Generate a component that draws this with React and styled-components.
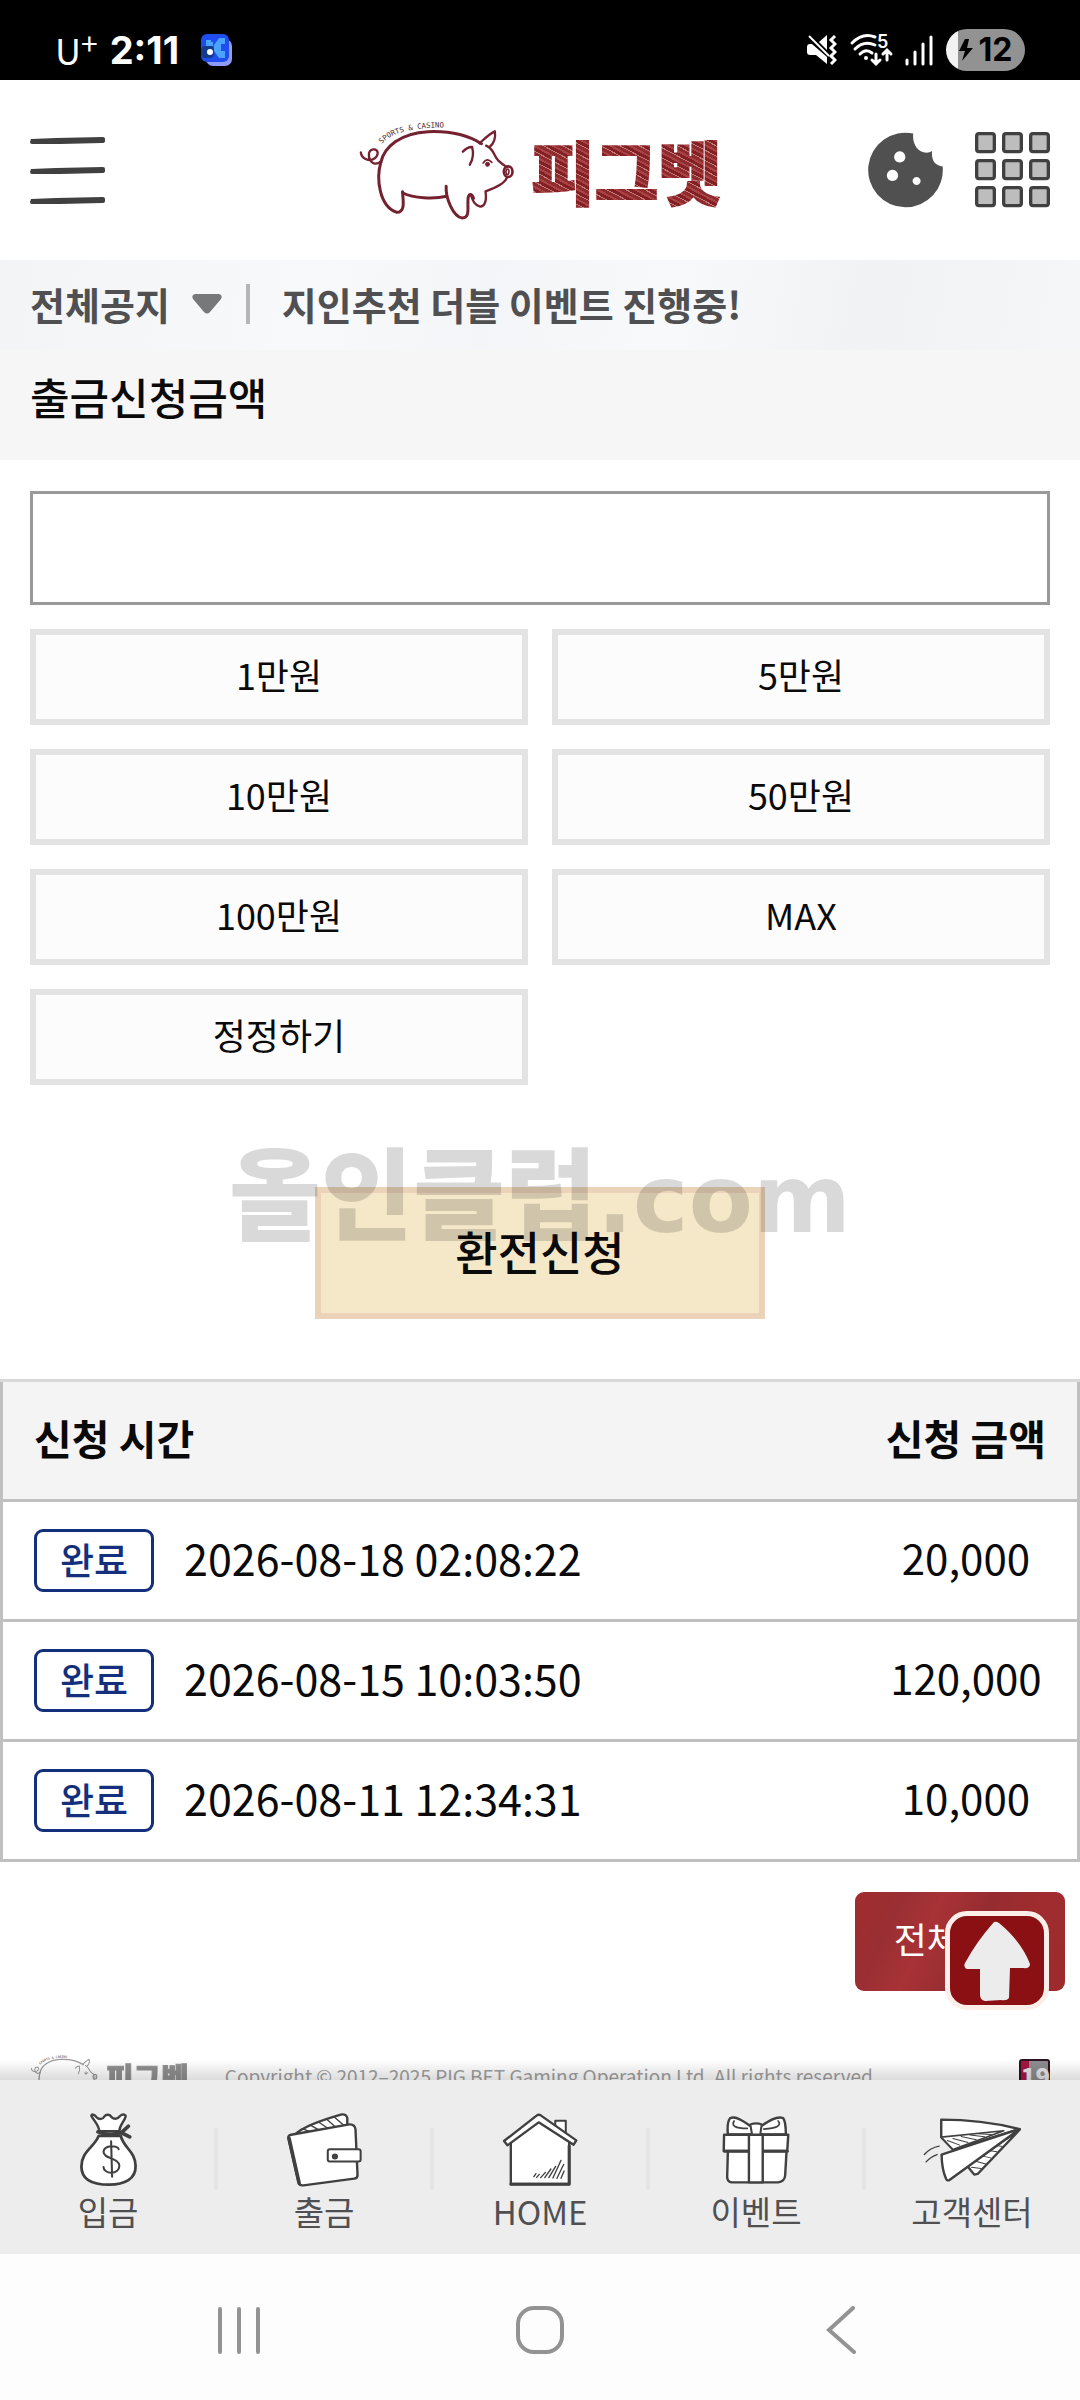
import { useState } from "react";
import styled, { ThemeProvider, createGlobalStyle } from "styled-components";

const theme = {
  text: "#0a0a0a",
  textSoft: "#505053",
  bg: "#ffffff",
  bgSoft: "#f6f6f6",
  line: "#c0c0c0",
  lineSoft: "#e3e3e3",
  ink: "#404040",
  brand: "#742230",
  done: "#14307c",
};

const GlobalStyle = createGlobalStyle`
  * {
    box-sizing: border-box;
  }
  body {
    margin: 0;
    background-color: #ffffff;
  }
  body, button, input {
    font-family: "Noto Sans CJK KR", "Noto Sans", sans-serif;
  }
  button {
    padding: 0;
    border: none;
    background: none;
    color: inherit;
    cursor: pointer;
  }
  svg {
    display: block;
    flex-shrink: 0;
  }
`;

const Screen = styled.div`
  display: flex;
  flex-direction: column;
  height: 100vh;
  overflow: hidden;
  background-color: ${({ theme }) => theme.bg};
  color: ${({ theme }) => theme.text};
`;

/* status bar */

const StatusBar = styled.div`
  display: flex;
  align-items: center;
  justify-content: space-between;
  height: 80px;
  padding: 20px 55px 0;
  flex-shrink: 0;
  background-color: #000000;
  color: #ffffff;
`;

const StatusGroup = styled.div`
  display: flex;
  align-items: center;
  gap: ${({ $gap }) => $gap}px;
`;

const Carrier = styled.span`
  padding-bottom: 2px;
  font-size: 36px;
  line-height: 42px;
  font-weight: 400;
  sup {
    font-size: 30px;
    line-height: 0;
    vertical-align: 10px;
  }
`;

const Clock = styled.span`
  margin-right: 10px;
  font-family: Inter, sans-serif;
  font-size: 38px;
  line-height: 42px;
  font-weight: 700;
`;

const Battery = styled.div`
  display: flex;
  align-items: center;
  justify-content: center;
  gap: 6px;
  width: 79px;
  height: 42px;
  border-radius: 21px;
  background: linear-gradient(90deg, #f2f2f2 12px, #929292 12px);
  color: #000000;
  font-family: Inter, sans-serif;
  font-size: 32px;
  line-height: 42px;
  font-weight: 700;
`;

/* header */

const Header = styled.header`
  display: grid;
  grid-template-columns: 1fr auto 1fr;
  align-items: center;
  height: 180px;
  padding: 0 30px;
  flex-shrink: 0;
`;

const HeaderActions = styled.div`
  display: flex;
  justify-content: flex-end;
  gap: 32px;
`;

const MenuButton = styled.button`
  justify-self: start;
`;

const Logo = styled.a`
  display: flex;
  align-items: center;
  gap: ${({ $small }) => ($small ? 8 : 16)}px;
  text-decoration: none;
`;

const LogoText = styled.span`
  font-size: ${({ $small }) => ($small ? 30 : 69)}px;
  line-height: ${({ $small }) => ($small ? 40 : 80)}px;
  font-weight: 900;
  color: transparent;
  background: ${({ $small }) =>
    $small
      ? "#8f8f8f"
      : "repeating-linear-gradient(28deg, #842024 0 3px, #a84346 3px 5px, #8f2a2d 5px 8px, #c07c7a 8px 9px)"};
  background-clip: text;
  -webkit-background-clip: text;
  -webkit-text-stroke: ${({ $small }) => ($small ? 1 : 2)}px transparent;
`;

const Notice = styled.div`
  display: flex;
  align-items: center;
  height: 90px;
  padding: 0 30px 2px;
  flex-shrink: 0;
  background: linear-gradient(100deg, #f2f4f6 0%, #f7f9fa 30%, #f4f5f8 45%, #f8f9fa 62%, #f1f2f4 80%, #f5f6f7 100%);
  color: ${({ theme }) => theme.textSoft};
  font-size: 38px;
  line-height: 48px;
  font-weight: 700;
`;

const NoticeFilter = styled.button`
  display: flex;
  align-items: center;
  gap: 22px;
  padding-right: 24px;
  border-right: 4px solid #b4b5b7;
  font-size: 38px;
  line-height: 40px;
  font-weight: 700;
`;

const NoticeLink = styled.a`
  margin-left: 32px;
  color: inherit;
  text-decoration: none;
`;

/* withdrawal form */

const Content = styled.main`
  flex: 1;
  min-height: 0;
  overflow-y: auto;
  scrollbar-width: none;
`;

const TitleBar = styled.div`
  height: 110px;
  padding: 18px 30px;
  background-color: ${({ theme }) => theme.bgSoft};
`;

const Title = styled.label`
  display: block;
  font-size: 43px;
  line-height: 56px;
  font-weight: 500;
`;

const Form = styled.form`
  padding: 31px 30px 60px;
`;

const AmountInput = styled.input`
  display: block;
  width: 100%;
  height: 114px;
  padding: 0 24px;
  border: 3px solid #999999;
  border-radius: 0;
  outline: none;
  background-color: ${({ theme }) => theme.bg};
  font-size: 42px;
`;

const Amounts = styled.div`
  display: grid;
  grid-template-columns: 1fr 1fr;
  gap: 24px;
  margin-top: 24px;
`;

const AmountButton = styled.button`
  height: 96px;
  padding-bottom: 7px;
  border: 6px solid ${({ theme }) => theme.lineSoft};
  background-color: #fcfcfc;
  font-size: 36px;
  line-height: 48px;
`;

const SubmitArea = styled.div`
  position: relative;
  display: flex;
  justify-content: center;
  margin-top: 102px;
`;

const SubmitButton = styled.button`
  width: 450px;
  height: 132px;
  padding-bottom: 7px;
  border: 6px solid #ebd3b9;
  background-color: #f5e8c8;
  font-size: 46px;
  line-height: 60px;
  font-weight: 500;
`;

const Watermark = styled.div`
  position: absolute;
  left: 0;
  right: 0;
  top: -58px;
  display: flex;
  align-items: baseline;
  justify-content: center;
  color: rgba(0, 0, 0, 0.15);
  font-size: 100px;
  line-height: 120px;
  font-weight: 900;
  pointer-events: none;
  span {
    font-family: "DejaVu Sans", sans-serif;
    font-size: 94px;
    font-weight: 700;
  }
`;

/* history */

const History = styled.table`
  width: 100%;
  border-collapse: collapse;
  border: 3px solid ${({ theme }) => theme.line};
`;

const HeadCell = styled.th`
  height: 120px;
  padding: 0 31px 7px;
  border-top: 3px solid #d9d9d9;
  border-bottom: 3px solid ${({ theme }) => theme.line};
  background-color: #f4f4f4;
  font-size: 41px;
  line-height: 56px;
  font-weight: 700;
  text-align: left;
  white-space: nowrap;
`;

const Cell = styled.td`
  height: 120px;
  padding: 0 31px;
  border-bottom: 3px solid ${({ theme }) => theme.line};
  font-size: 42px;
  line-height: 56px;
  white-space: nowrap;
`;

const AmountCell = styled(Cell)`
  width: 1px;
  padding: 0 0 7px;
  text-align: center;
`;

const Request = styled.div`
  display: flex;
  align-items: center;
  gap: 30px;
`;

const RequestTime = styled.time`
  padding-bottom: 7px;
  font-size: 43px;
`;

const Status = styled.span`
  height: 63px;
  padding: 0 23px;
  border: 3px solid ${({ theme }) => theme.done};
  border-radius: 9px;
  color: ${({ theme }) => theme.done};
  font-size: 37px;
  line-height: 54px;
  font-weight: 500;
`;

const HistoryActions = styled.div`
  display: flex;
  justify-content: flex-end;
  padding: 30px 15px 60px;
`;

const ClearButton = styled.button`
  width: 210px;
  height: 99px;
  padding-bottom: 7px;
  border-radius: 9px;
  background: linear-gradient(115deg, #a02c2e 0%, #9a2f33 20%, #a83236 35%, #962c30 55%, #a02c2f 75%, #9c2b2e 100%);
  color: #ffffff;
  font-size: 36px;
  line-height: 48px;
`;

const Footer = styled.footer`
  display: flex;
  align-items: center;
  padding: 0 30px;
  height: 50px;
`;

const Copyright = styled.p`
  flex: 1;
  margin: 0 0 0 36px;
  color: #a0a0a0;
  font-size: 19px;
  line-height: 24px;
  white-space: nowrap;
`;

const AdultMark = styled.span`
  width: 31px;
  height: 34px;
  border: 2px solid #2c1420;
  border-radius: 3px;
  background: linear-gradient(90deg, #a3173f 30%, #8c8c90 30%);
  color: #e4e4e6;
  font-size: 24px;
  line-height: 30px;
  font-weight: 900;
  text-align: center;
`;

/* bottom navigation */

const BottomNav = styled.nav`
  position: relative;
  display: grid;
  grid-template-columns: repeat(5, 1fr);
  height: 174px;
  flex-shrink: 0;
  background-color: #ededed;
  &::before {
    content: "";
    position: absolute;
    left: 0;
    right: 0;
    bottom: 100%;
    height: 20px;
    background: linear-gradient(rgba(0, 0, 0, 0), rgba(0, 0, 0, 0.14));
    pointer-events: none;
  }
`;

const NavItem = styled.a`
  position: relative;
  display: flex;
  flex-direction: column;
  align-items: center;
  padding-top: 31px;
  color: ${({ theme }) => theme.textSoft};
  font-size: 33px;
  line-height: 48px;
  font-weight: 400;
  text-decoration: none;
  & + &::before {
    content: "";
    position: absolute;
    left: -2px;
    top: 48px;
    width: 4px;
    height: 62px;
    background-color: #e5e5e5;
  }
`;

const NavIcon = styled.span`
  display: flex;
  align-items: center;
  height: 76px;
`;

const TopButton = styled.button`
  position: absolute;
  right: 31px;
  bottom: calc(100% + 70px);
  display: flex;
  align-items: center;
  justify-content: center;
  width: 104px;
  height: 99px;
  border: 5px solid #fdeeea;
  border-radius: 22px;
  background-color: #8b1014;
`;

const SystemNav = styled.div`
  display: grid;
  grid-template-columns: repeat(3, 1fr);
  align-items: center;
  justify-items: center;
  height: 146px;
  padding: 6px 88px 0;
  flex-shrink: 0;
  background-color: #fdfdfd;
  color: #939393;
`;

/* drawings */

const Pig = ({ width, height, color }) => (
  <svg width={width} height={height} viewBox="54 54 470 306" fill="none" stroke={color} strokeWidth="9" strokeLinecap="round" strokeLinejoin="round">
    <path d="M62 154C64 172 82 181 98 175C118 166 116 144 100 145C84 147 82 166 92 180C98 190 112 190 122 182" strokeWidth="7" />
    <path d="M122 184C132 138 180 96 264 92C336 89 392 108 424 128" />
    <path d="M418 127C434 112 448 98 464 91C467 108 462 128 448 138M438 134C462 144 460 164 474 178C484 188 492 194 500 198" strokeWidth="7" />
    <ellipse cx="504" cy="212" rx="13" ry="16" strokeWidth="8" />
    <path d="M499 206C504 200 510 210 504 220C498 224 496 214 499 206" strokeWidth="5" />
    <path d="M500 230C494 248 462 262 436 271C440 300 434 316 420 317C404 314 398 300 392 282" strokeWidth="7" />
    <path d="M318 256C316 290 338 346 366 351C392 350 380 318 384 290C386 276 396 278 400 292" />
    <path d="M188 276C220 292 280 295 320 286" />
    <path d="M122 184C108 230 116 316 170 334C196 334 189 300 187 272" />
    <path d="M368 152C378 142 386 137 396 138C401 158 398 176 389 191" strokeWidth="7" />
    <path d="M429 186Q440 168 455 184" strokeWidth="5" />
    <circle cx="442" cy="190" r="6" fill={color} strokeWidth="3" />
    <path id={`pig-arc-${width}`} d="M124 129C160 92 220 76 350 80" stroke="none" />
    <text fill="#4a2a2e" stroke="none" fontFamily="DejaVu Sans Mono, monospace" fontSize="22">
      <textPath href={`#pig-arc-${width}`}>SPORTS &amp; CASINO</textPath>
    </text>
  </svg>
);

const MenuIcon = () => (
  <svg width="75" height="67" viewBox="0 0 75 67" fill={theme.ink}>
    {[0, 30, 60].map((y) => (
      <path key={y} transform={`translate(0 ${y})`} d="M1 2L26 1L73 0Q75 0 75 2V4Q75 6 72 6L30 7L2 7Q0 7 0 5Z" />
    ))}
  </svg>
);

const CookieIcon = () => (
  <svg width="75" height="76" viewBox="85 65 227 229">
    <path
      fill="#505050"
      fillRule="evenodd"
      d="M222 69C218 98 234 126 262 127Q272 127 279 122C276 148 286 166 311 169A113 113 0 1 1 222 69ZM181 123a17 17 0 1 0 .1 0ZM159 179a17 17 0 1 0 .1 0ZM232 201a12 12 0 1 0 .1 0Z"
    />
  </svg>
);

const GridIcon = () => (
  <svg width="75" height="76" viewBox="0 0 225 228" fill="#bdbdbd" stroke={theme.ink} strokeWidth="10">
    {[5, 86, 167].map((y) => [5, 86, 167].map((x) => <rect key={`${x}-${y}`} x={x} y={y} width="53" height="54" rx="7" />))}
  </svg>
);

const iconProps = {
  preserveAspectRatio: "none",
  fill: "#ffffff",
  stroke: theme.ink,
  strokeWidth: 7,
  strokeLinejoin: "round",
  strokeLinecap: "round",
};

const BagIcon = () => (
  <svg width="59" height="75" viewBox="221 212 171 226" {...iconProps}>
    <path d="M280 270C278 250 264 238 257 224C256 216 266 220 272 228C280 236 290 234 294 226C300 218 310 218 316 228C324 236 334 232 340 224C348 216 358 220 356 226C352 242 338 250 338 270Z" />
    <path d="M278 284C266 318 228 330 228 376C228 418 262 431 308 431C354 431 386 414 385 374C384 330 350 320 342 284Z" strokeWidth="8" />
    <path d="M276 272Q308 286 344 274M344 274L364 255M346 276L368 287" strokeWidth="11" fill="none" />
    <path d="M336 324C334 312 294 310 292 332C292 354 338 350 338 374C338 402 292 400 292 378M314 300L317 407" strokeWidth="6" fill="none" />
  </svg>
);

const WalletIcon = () => (
  <svg width="76" height="75" viewBox="825 222 222 224" {...iconProps}>
    <path d="M850 290Q880 260 988 229Q1002 228 1004 240L1004 262Z" />
    <path d="M872 272L900 282M896 261L922 276M920 252L946 270M944 244L968 265M966 237L992 260" strokeWidth="4" fill="none" />
    <path d="M840 290L1010 259Q1026 258 1028 274L1034 410Q1034 420 1024 421L876 441Q864 443 861 432L832 302Q830 292 840 290Z" />
    <path d="M834 300L864 436" strokeWidth="10" />
    <rect x="947" y="333" width="96" height="37" rx="6" strokeWidth="6" />
    <circle cx="968" cy="355" r="7" fill={theme.ink} strokeWidth="4" />
  </svg>
);

const HouseIcon = () => (
  <svg width="76" height="76" viewBox="1460 208 224 228" {...iconProps}>
    <path d="M1617 275V237H1648V292" strokeWidth="6" />
    <path d="M1486 300V427H1658V300L1568 236Z" />
    <path d="M1658 312V428H1486" strokeWidth="9" fill="none" />
    <path d="M1466 298L1562 222Q1568 217 1574 221L1679 296L1671 309L1568 242L1476 311Z" />
    <path d="M1634 410L1643 388M1622 410L1642 368M1610 409L1634 356M1598 408L1618 374M1586 408L1604 382M1574 408L1588 392M1562 407L1570 398M1554 405L1560 396" strokeWidth="4" fill="none" />
  </svg>
);

const GiftIcon = () => (
  <svg width="68" height="69" viewBox="535 222 197 206" {...iconProps}>
    <path d="M616 254C592 236 572 224 558 232Q549 244 552 280H720Q720 242 712 231C694 224 672 238 650 254Z" />
    <path d="M570 240C562 254 572 262 608 262M698 240C708 254 694 262 656 264" strokeWidth="5" fill="none" />
    <path d="M552 330L550 408Q551 423 566 423H698Q717 420 718 402L722 330Z" />
    <path d="M541 281H727L724 329H540Z" />
    <path d="M542 330H724" strokeWidth="9" />
    <path d="M613 281H653V423H613Z" />
    <path d="M617 250Q634 244 650 250L646 280H622Z" strokeWidth="6" />
  </svg>
);

const PlaneIcon = () => (
  <svg width="99" height="65" viewBox="1109 222 288 194" {...iconProps}>
    <path d="M1162 230Q1280 230 1390 258L1196 319L1162 282Z" />
    <path d="M1162 282L1344 263L1196 319Z" strokeWidth="5" />
    <path d="M1180 292L1216 306M1196 286L1240 298M1220 280L1264 290M1246 276L1288 281M1270 272L1308 274" strokeWidth="3" fill="none" />
    <path d="M1238 368L1258 394L1268 392L1390 260Z" />
    <path d="M1250 372L1278 376M1262 354L1292 362M1280 338L1306 344M1300 322L1324 326M1318 306L1340 310" strokeWidth="3" fill="none" />
    <path d="M1163 334L1390 258L1186 410Q1180 414 1176 406Q1164 380 1163 334Z" />
    <path d="M1113 334Q1130 314 1156 309M1118 356Q1132 340 1150 334" strokeWidth="4" fill="none" />
  </svg>
);

const ArrowIcon = () => (
  <svg width="68" height="80" viewBox="0 0 68 80" fill="#ececec">
    <path d="M31 1Q33 0 36 2Q58 20 67 43Q67 48 60 47L47 47L46 77Q44 80 38 79L22 80Q17 79 17 74L17 48L4 48Q0 46 2 42Q14 20 31 1Z" />
  </svg>
);

const AppIcon = () => (
  <svg width="32" height="32" viewBox="0 0 32 32">
    <rect x="5" y="5" width="26" height="27" rx="7" fill="#8f9cf5" />
    <rect width="28" height="28" rx="6" fill="#1f4df0" />
    <path d="M5 6H10V8H12V12H5ZM18 4H24V10H20V17H24V24H18L13 17V11Z" fill="#49a3ff" />
    <rect y="12" width="13" height="12" rx="4" fill="#143a8c" />
    <circle cx="9" cy="18" r="3" fill="#ffffff" />
  </svg>
);

const MuteIcon = () => (
  <svg width="30" height="30" viewBox="0 0 30 30" fill="#ffffff">
    <path d="M0 12Q0 9 3 9H5L20 22V29L9 20H3Q0 20 0 17ZM12 7L20 0V15Z" />
    <path d="M2 1L22 21" stroke="#ffffff" strokeWidth="2" />
    <path d="M28 1L24 5L28 9L24 13L28 17L24 21L28 25L24 29" fill="none" stroke="#ffffff" strokeWidth="3" />
  </svg>
);

const WifiIcon = () => (
  <svg width="42" height="32" viewBox="0 0 42 32" overflow="visible" fill="none" stroke="#ffffff" strokeWidth="3" strokeLinecap="round">
    <path d="M2 9Q13 -2 25 3M5 15Q14 6 25 11M10 20Q16 14 22 19" />
    <circle cx="16" cy="24" r="2" fill="#ffffff" stroke="none" />
    <path d="M26 20V29M22 26L26 30L30 26M37 26V17M33 20L37 16L41 20" />
    <text x="27" y="14" fill="#ffffff" stroke="none" fontFamily="Inter, sans-serif" fontWeight="600" fontSize="18">5</text>
  </svg>
);

const SignalIcon = () => (
  <svg width="28" height="31" viewBox="0 0 28 31" stroke="#ffffff" strokeWidth="3" strokeLinecap="round">
    <path d="M2 25V29M10 17V29M18 9V29M26 2V29" />
  </svg>
);

const BoltIcon = () => (
  <svg width="14" height="22" viewBox="0 0 14 22">
    <path d="M6 0L0 12H6L3 22L14 9H8L10 0Z" />
  </svg>
);

const amounts = ["1만원", "5만원", "10만원", "50만원", "100만원", "MAX", "정정하기"];
const amountValues = [10000, 50000, 100000, 500000, 1000000];

const requests = [
  { time: "2026-08-18 02:08:22", amount: "20,000" },
  { time: "2026-08-15 10:03:50", amount: "120,000" },
  { time: "2026-08-11 12:34:31", amount: "10,000" },
];

const navItems = [
  { label: "입금", Icon: BagIcon },
  { label: "출금", Icon: WalletIcon },
  { label: "HOME", Icon: HouseIcon },
  { label: "이벤트", Icon: GiftIcon },
  { label: "고객센터", Icon: PlaneIcon },
];

function App() {
  const [amount, setAmount] = useState("");

  const handleAmount = (index) => {
    if (amountValues[index]) {
      setAmount(String(Number(amount || 0) + amountValues[index]));
    } else {
      setAmount("");
    }
  };

  return (
    <ThemeProvider theme={theme}>
      <GlobalStyle />
      <Screen>
        <StatusBar>
          <StatusGroup $gap={12}>
            <Carrier>
              U<sup>+</sup>
            </Carrier>
            <Clock>2:11</Clock>
            <AppIcon />
          </StatusGroup>
          <StatusGroup $gap={13}>
            <MuteIcon />
            <WifiIcon />
            <SignalIcon />
            <Battery>
              <BoltIcon />
              12
            </Battery>
          </StatusGroup>
        </StatusBar>
        <Header>
          <MenuButton aria-label="메뉴">
            <MenuIcon />
          </MenuButton>
          <Logo href="#">
            <Pig width={157} height={102} color={theme.brand} />
            <LogoText>피그벳</LogoText>
          </Logo>
          <HeaderActions>
            <button aria-label="쿠키">
              <CookieIcon />
            </button>
            <button aria-label="전체 메뉴">
              <GridIcon />
            </button>
          </HeaderActions>
        </Header>
        <Notice>
          <NoticeFilter>
            전체공지
            <svg width="30" height="20" viewBox="0 0 30 20" fill="#77787a">
              <path d="M3 0H27Q31 1 29 5L18 18Q15 21 12 18L1 5Q-1 1 3 0Z" />
            </svg>
          </NoticeFilter>
          <NoticeLink href="#">지인추천 더블 이벤트 진행중!</NoticeLink>
        </Notice>
        <Content>
          <TitleBar>
            <Title htmlFor="amount">출금신청금액</Title>
          </TitleBar>
          <Form onSubmit={(e) => e.preventDefault()}>
            <AmountInput id="amount" type="text" value={amount} onChange={(e) => setAmount(e.target.value)} />
            <Amounts>
              {amounts.map((label, index) => (
                <AmountButton key={label} type="button" onClick={() => handleAmount(index)}>
                  {label}
                </AmountButton>
              ))}
            </Amounts>
            <SubmitArea>
              <SubmitButton type="submit">환전신청</SubmitButton>
              <Watermark>
                올인클럽<span>.com</span>
              </Watermark>
            </SubmitArea>
          </Form>
          <History>
            <thead>
              <tr>
                <HeadCell>신청 시간</HeadCell>
                <HeadCell>신청 금액</HeadCell>
              </tr>
            </thead>
            <tbody>
              {requests.map((request) => (
                <tr key={request.time}>
                  <Cell>
                    <Request>
                      <Status>완료</Status>
                      <RequestTime>{request.time}</RequestTime>
                    </Request>
                  </Cell>
                  <AmountCell>{request.amount}</AmountCell>
                </tr>
              ))}
            </tbody>
          </History>
          <HistoryActions>
            <ClearButton>전체삭제</ClearButton>
          </HistoryActions>
          <Footer>
            <Logo href="#" $small>
              <Pig width={68} height={44} color="#9a9a9a" />
              <LogoText $small>피그벳</LogoText>
            </Logo>
            <Copyright>Copyright © 2012–2025 PIG BET Gaming Operation Ltd. All rights reserved.</Copyright>
            <AdultMark>19</AdultMark>
          </Footer>
        </Content>
        <BottomNav>
          {navItems.map(({ label, Icon }) => (
            <NavItem key={label} href="#">
              <NavIcon>
                <Icon />
              </NavIcon>
              {label}
            </NavItem>
          ))}
          <TopButton aria-label="맨 위로">
            <ArrowIcon />
          </TopButton>
        </BottomNav>
        <SystemNav>
          <button aria-label="최근 앱">
            <svg width="42" height="47" viewBox="0 0 42 47" stroke="currentColor" strokeWidth="4" strokeLinecap="round">
              <path d="M2 2V45M21 2V45M40 2V45" />
            </svg>
          </button>
          <button aria-label="홈">
            <svg width="48" height="48" viewBox="0 0 48 48" fill="none" stroke="currentColor" strokeWidth="4">
              <rect x="2" y="2" width="44" height="44" rx="16" />
            </svg>
          </button>
          <button aria-label="뒤로">
            <svg width="30" height="48" viewBox="0 0 30 48" fill="none" stroke="currentColor" strokeWidth="4" strokeLinecap="round">
              <path d="M27 2L3 24L28 46" />
            </svg>
          </button>
        </SystemNav>
      </Screen>
    </ThemeProvider>
  );
}

export default App;
